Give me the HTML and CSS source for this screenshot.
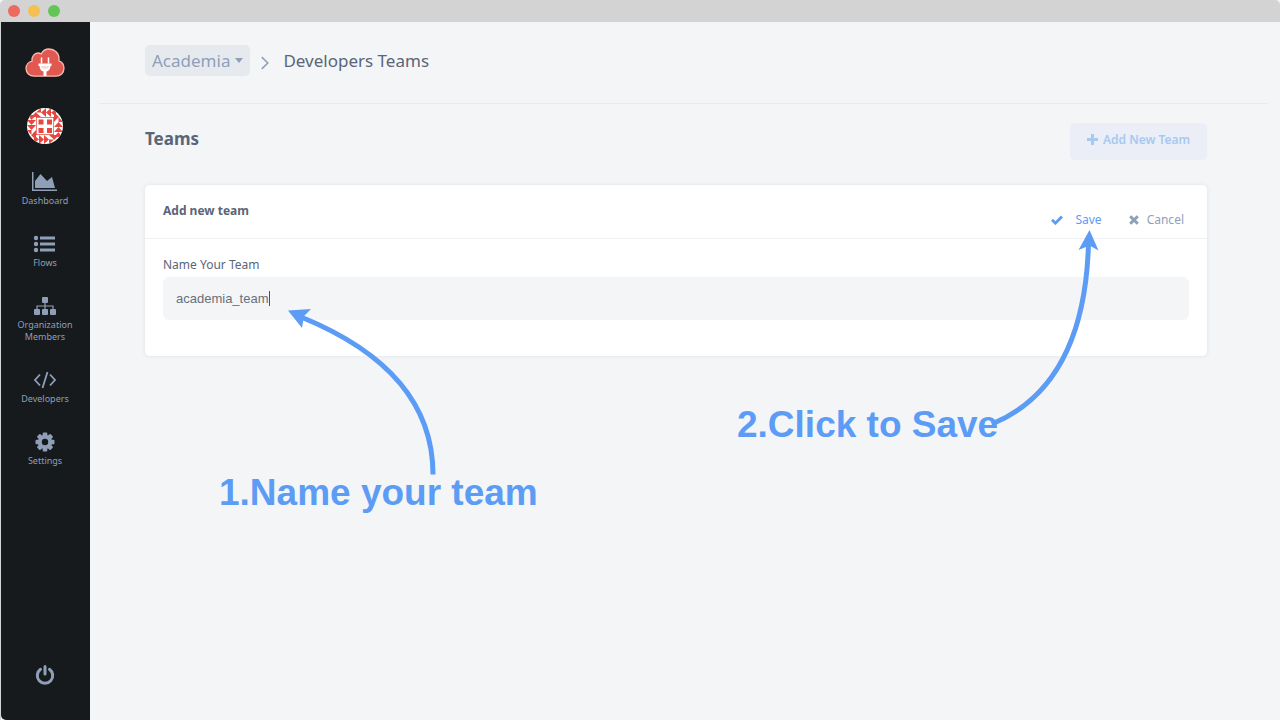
FILE: index.html
```html
<!DOCTYPE html>
<html lang="en">
<head>
<meta charset="utf-8">
<title>Developers Teams</title>
<link rel="stylesheet" href="styles.css">
</head>
<body>
<header class="titlebar">
  <span class="dot dot-close"></span><span class="dot dot-min"></span><span class="dot dot-max"></span>
</header>
<div class="app">
  <nav class="sidebar">
    <a class="logo" href="#" aria-label="Home">
      <svg width="40" height="30" viewBox="0 0 40 30"><path d="M9 28.200C4.500 28.200 1 24.800 1 20.600c0-4 2.700-6.800 6-7.400C6.300 8.500 9.500 5 13 5c1.300 0 2.300.300 3.200.900C17.800 2.800 20.500 1 24 1c5.600 0 10 4 10 9.500v2.300c3 1 5 4 5 7.400 0 4.600-3.500 8-8 8z" fill="#e0584f" stroke="#f5b9b0" stroke-width="1.300"/><path d="M16.500 9.500v6M23.500 9.500v6" stroke="#fff" stroke-width="1.500"/><path d="M13.500 15.500h13v2.500h-1c-.3 3.500-1.800 5-4 5.500v4.500h-3v-4.500c-2.200-.5-3.700-2-4-5.500h-1z" fill="#fff"/><path d="M16 18h8c-.5 2-1.500 3-4 3s-3.500-1-4-3z" fill="#f9d9d6"/></svg>
    </a>
    <a class="avatar" href="#" aria-label="Profile">
      <svg width="36" height="36" viewBox="0 0 36 36"><defs><clipPath id="round"><circle cx="18" cy="18" r="18"/></clipPath>
        <g id="edge"><path d="M4 9l5-5v5zM9 4.500L14 0v4.500zM9 4.500l5 4.500H9zM14 4.500L19 0v9zM19 4.500L24 0v9zM24 4.500L29 1v8z"/></g></defs>
        <g clip-path="url(#round)"><path fill="#fff" d="M0 0h36v36H0z"/><g fill="#e6473f"><use href="#edge"/><use href="#edge" transform="rotate(90 18 18)"/><use href="#edge" transform="rotate(180 18 18)"/><use href="#edge" transform="rotate(270 18 18)"/><path fill-rule="evenodd" d="M9 9h18v18H9zM9.700 9.700v16.600h16.600V9.700z"/><path d="M11.500 11.500h5v5h-5zM20 11.500h5v5h-5zM11.500 20h5v5h-5zM20 20h5v5h-5z"/></g></g></svg>
    </a>
    <a class="item" href="#"><svg width="26" height="20" viewBox="0 0 26 20" fill="currentColor"><path d="M0 0h1.500v17.500H25V19H0z"/><path d="M3 16V9l5.500-7 6.500 7 5-4 3 11z"/></svg><span>Dashboard</span></a>
    <a class="item" href="#"><svg width="26" height="20" viewBox="0 0 26 20" fill="currentColor"><circle cx="4" cy="4" r="2.200"/><circle cx="4" cy="10" r="2.200"/><circle cx="4" cy="16" r="2.200"/><path d="M8 2.500h15v3H8zM8 8.500h15v3H8zM8 14.500h15v3H8z"/></svg><span>Flows</span></a>
    <a class="item" href="#"><svg width="26" height="20" viewBox="0 0 26 20" fill="currentColor"><rect x="10" y="1" width="6" height="6" rx="1"/><rect x="2" y="13" width="6" height="6" rx="1"/><rect x="10" y="13" width="6" height="6" rx="1"/><rect x="18" y="13" width="6" height="6" rx="1"/><path d="M13 6v8M5 14v-4h16v4" fill="none" stroke="currentColor" stroke-width="1.200"/></svg><span>Organization<br>Members</span></a>
    <a class="item" href="#"><svg width="26" height="20" viewBox="0 0 26 20" fill="none" stroke="currentColor" stroke-width="1.800"><path d="M8 4.500L3 10l5 5.500M18 4.500l5 5.500-5 5.500M15.500 2l-5 16"/></svg><span>Developers</span></a>
    <a class="item" href="#"><svg width="26" height="20" viewBox="0 0 26 20"><g fill="currentColor"><circle cx="13" cy="10" r="7.200"/><rect x="10.700" y=".5" width="4.600" height="19" rx="1"/><rect x="10.700" y=".5" width="4.600" height="19" rx="1" transform="rotate(45 13 10)"/><rect x="10.700" y=".5" width="4.600" height="19" rx="1" transform="rotate(90 13 10)"/><rect x="10.700" y=".5" width="4.600" height="19" rx="1" transform="rotate(135 13 10)"/></g><circle cx="13" cy="10" r="3.200" fill="#171a1c"/></svg><span>Settings</span></a>
    <button class="power" type="button" aria-label="Log out"><svg width="20" height="22" viewBox="0 0 20 22" fill="none" stroke="currentColor" stroke-width="3" stroke-linecap="round"><path d="M5.500 5.300a7.700 7.700 0 1 0 9 0M10 2.500v7.500"/></svg></button>
  </nav>
  <main class="main">
    <div class="crumbs">
      <button class="org" type="button">Academia <span class="caret-down"></span></button>
      <svg class="chev" width="8" height="14" viewBox="0 0 8 14" fill="none" stroke="#8f9fb8" stroke-width="1.600"><path d="M.8 1.200L6.800 7 .8 12.800"/></svg>
      <span class="page">Developers Teams</span>
    </div>
    <section class="content">
      <div class="heading">
        <h1>Teams</h1>
        <button class="add" type="button"><svg width="11" height="11" viewBox="0 0 11 11"><path d="M5.500 0v11M0 5.500h11" stroke="currentColor" stroke-width="3"/></svg>Add New Team</button>
      </div>
      <form class="card">
        <div class="card-head">
          <h2>Add new team</h2>
          <div class="actions">
            <button class="save" type="button"><svg width="12" height="10" viewBox="0 0 12 10" fill="none" stroke="currentColor" stroke-width="2.800"><path d="M1 4.800l3.400 3.400L11 1.500"/></svg>Save</button>
            <button class="cancel" type="button"><svg width="10" height="10" viewBox="0 0 10 10" fill="none" stroke="currentColor" stroke-width="3"><path d="M1.200 1.200l7.600 7.600M8.800 1.200L1.200 8.800"/></svg>Cancel</button>
          </div>
        </div>
        <div class="card-body">
          <label for="team">Name Your Team</label>
          <div class="field"><input id="team" type="text" value="academia_team"><span class="cursor"></span></div>
        </div>
      </form>
    </section>
  </main>
</div>
<div class="notes">
  <svg class="arrows" width="1280" height="720" viewBox="0 0 1280 720" fill="none" stroke="#5c9cf5" stroke-width="5"><path d="M433 474.500C433 404 387 352 301 317"/><path d="M992 424C1052 399 1086 341 1088.500 243"/><g fill="#5c9cf5" stroke="none"><path d="M288 310.500l23-1.500-7 7-2 12z"/><path d="M1089.500 230l9 20.500-9-5-11 4.500z"/></g></svg>
  <p class="note note-name">1.Name your team</p>
  <p class="note note-save">2.Click to Save</p>
</div>
</body>
</html>
```
FILE: styles.css
```css
* { box-sizing: border-box; }
body {
  margin: 0;
  min-height: 100vh;
  display: flex;
  flex-direction: column;
  position: relative;
  background: #f3f5f7;
  color: #5a6578;
  font-family: "Noto Sans", sans-serif;
  font-size: 12px;
}
h1, h2, p { margin: 0; }
a { color: inherit; text-decoration: none; }
button { border: 0; padding: 0; background: none; color: inherit; font: inherit; }
svg { display: block; }

.titlebar { height: 22px; display: flex; align-items: center; gap: 8px; padding-left: 8px; background: #d3d3d3; border-radius: 5px 5px 0 0; }
.dot { width: 12px; height: 12px; border-radius: 50%; }
.dot-close { background: #ed6a5f; }
.dot-min { background: #f5c04f; }
.dot-max { background: #62c655; }

.app { flex: 1; display: flex; border-left: 1px solid #d3d3d3; }
.sidebar {
  width: 89px;
  flex: none;
  display: flex;
  flex-direction: column;
  align-items: center;
  padding: 26px 1px 34px 0;
  background: #171a1c;
  border-radius: 0 0 0 5px;
  color: #8f9fb8;
}
.avatar { margin: 30px 0 28px; }
.item {
  display: flex;
  flex-direction: column;
  align-items: center;
  gap: 3px;
  margin-bottom: 27px;
  font-size: 9px;
  line-height: 12px;
  text-align: center;
}
.power { margin-top: auto; }

.main { flex: 1; min-width: 0; }
.crumbs {
  display: flex;
  align-items: center;
  margin: 0 12px 0 9px;
  padding: 23px 46px 27px;
  border-bottom: 1px solid #e7eaee;
  font-size: 17px;
  line-height: 31px;
}
.org { display: flex; align-items: center; gap: 5px; height: 31px; padding: 0 7px; border-radius: 5px; background: #e6eaef; color: #8f9fb8; }
.caret-down { border: 4px solid transparent; border-top: 5px solid #8f9fb8; border-bottom: 0; }
.chev { margin: 4px 14px 0 11px; }

.content { padding: 19px 73px 0 55px; }
.heading { display: flex; justify-content: space-between; align-items: flex-start; }
h1 { font-size: 17px; line-height: 32px; }
.add { display: flex; align-items: center; justify-content: center; gap: 5px; width: 137px; height: 37px; padding-bottom: 4px; border-radius: 5px; background: #ebeef6; color: #a6c9f2; font-weight: 600; }
.card { margin-top: 25px; background: #fff; border-radius: 5px; box-shadow: 0 0 5px rgba(40, 60, 90, .09); }
.card-head { display: flex; justify-content: space-between; height: 54px; padding: 17px 23px 0 18px; border-bottom: 1px solid #eff1f3; }
h2 { font-size: 12px; line-height: 18px; }
.actions { display: flex; gap: 27px; height: 27px; padding-top: 9px; line-height: 18px; }
.actions button { display: flex; align-items: center; }
.save { gap: 12px; color: #5c9cf5; }
.cancel { gap: 8px; color: #8f9fb8; }
.card-body { padding: 17px 18px 36px; }
.card-body label { display: block; margin-bottom: 3px; line-height: 18px; }
.field { display: flex; align-items: center; height: 43px; padding-left: 13px; border-radius: 6px; background: #f3f5f7; }
.field input { field-sizing: content; border: 0; padding: 0; outline: 0; background: none; color: #67707d; font: 13px "Liberation Sans", sans-serif; }
.cursor { width: 1px; height: 15px; background: #4a5260; }

.notes { position: absolute; inset: 0; pointer-events: none; }
.arrows { position: absolute; left: 0; top: 0; }
.note { position: absolute; color: #5c9cf5; font: bold 37px/44px "Liberation Sans", sans-serif; white-space: nowrap; }
.note-name { left: 219px; top: 471px; }
.note-save { left: 737px; top: 403px; }
```
